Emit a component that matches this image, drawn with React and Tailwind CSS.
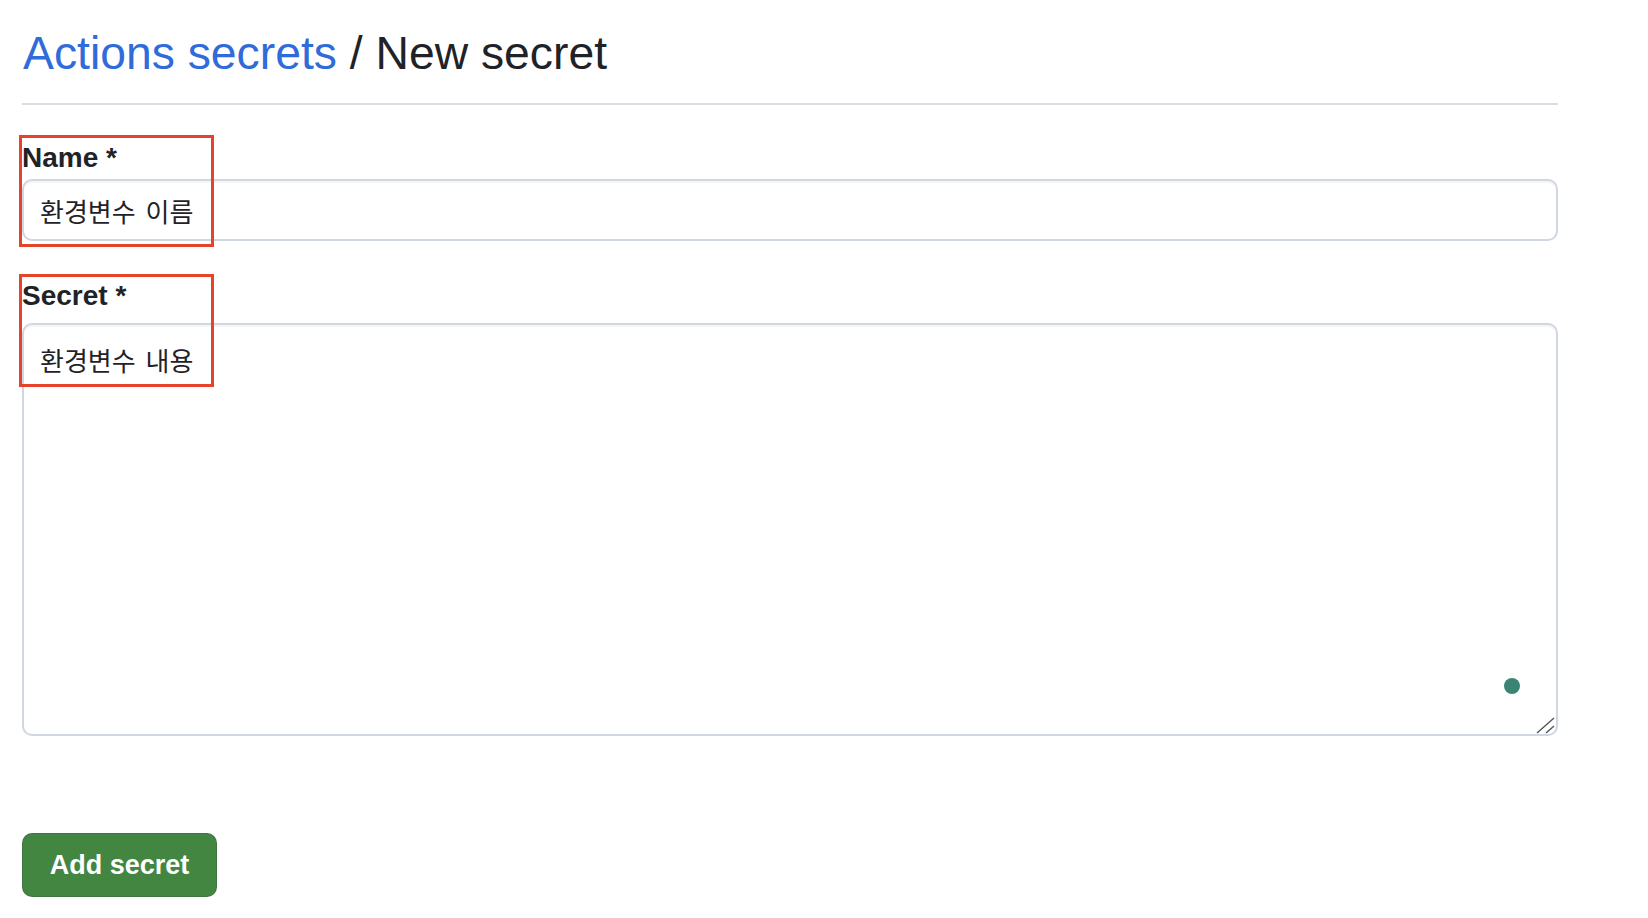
import { useState } from 'react'

const Annotation = ({ className }) => (
  <div
    className={`pointer-events-none absolute border-[3px] border-[#e6432b] ${className}`}
  />
)

const App = () => {
  const [name, setName] = useState('환경변수 이름')
  const [secret, setSecret] = useState('환경변수 내용')

  return (
    <div className="min-h-screen bg-white font-['Liberation_Sans','Noto_Sans_CJK_KR',sans-serif] text-[#1f2328]">
      <div className="ml-[22px] w-[1536px] pt-[25px]">
        {/* Heading */}
        <h1 className="pl-[1px] text-[46.3px] leading-[56px] font-normal">
          <a href="#" className="text-[#2f6bd9]">Actions secrets</a> / New secret
        </h1>
        <div className="mt-[22px] h-[2px] bg-[#d8dee4]" />

        {/* Name */}
        <div className="relative mt-[35px]">
          <label className="block pt-[1px] text-[28px] leading-[34px] font-bold">Name *</label>
          <input
            value={name}
            onChange={(e) => setName(e.target.value)}
            className="mt-[4px] block h-[62px] w-full rounded-[10px] border-2 border-[#d0d7de] bg-white pl-[16px] font-['Noto_Sans_CJK_KR',sans-serif] text-[26px] tracking-[0px] [word-spacing:4px] text-[#1f2328] shadow-[inset_0_2px_0_rgba(208,215,222,0.25)] outline-none"
          />
          <Annotation className="-left-[3px] -top-[5px] h-[112px] w-[195px]" />
        </div>

        {/* Secret */}
        <div className="relative mt-[37px]">
          <label className="block pt-[1px] text-[28px] leading-[34px] font-bold">Secret *</label>
          <div className="relative mt-[10px]">
            <textarea
              value={secret}
              onChange={(e) => setSecret(e.target.value)}
              className="block h-[413px] w-full resize-none rounded-[10px] border-2 border-[#d0d7de] bg-white pl-[16px] pt-[17px] font-['Noto_Sans_CJK_KR',sans-serif] text-[26px] leading-[36px] tracking-[0px] [word-spacing:4px] text-[#1f2328] shadow-[inset_0_2px_0_rgba(208,215,222,0.25)] outline-none"
            />
            {/* extension dot */}
            <span className="absolute bottom-[42px] right-[38px] h-[16px] w-[16px] rounded-full bg-[#3a8474]" />
            {/* resize grip */}
            <svg
              className="absolute bottom-[2px] right-[2px]"
              width="20"
              height="17"
              viewBox="0 0 20 17"
            >
              <path d="M1 16 L18 1 M10 16 L18 9" stroke="#5a5a5a" strokeWidth="1.5" fill="none" />
            </svg>
          </div>
          <Annotation className="-left-[3px] -top-[4px] h-[113px] w-[195px]" />
        </div>

        {/* Submit */}
        <button className="mt-[97px] flex h-[64px] w-[195px] items-center justify-center rounded-[10px] border border-[rgba(31,35,40,0.15)] bg-[#428642] text-[27px] font-bold text-white">
          Add secret
        </button>
      </div>
    </div>
  )
}

export default App
